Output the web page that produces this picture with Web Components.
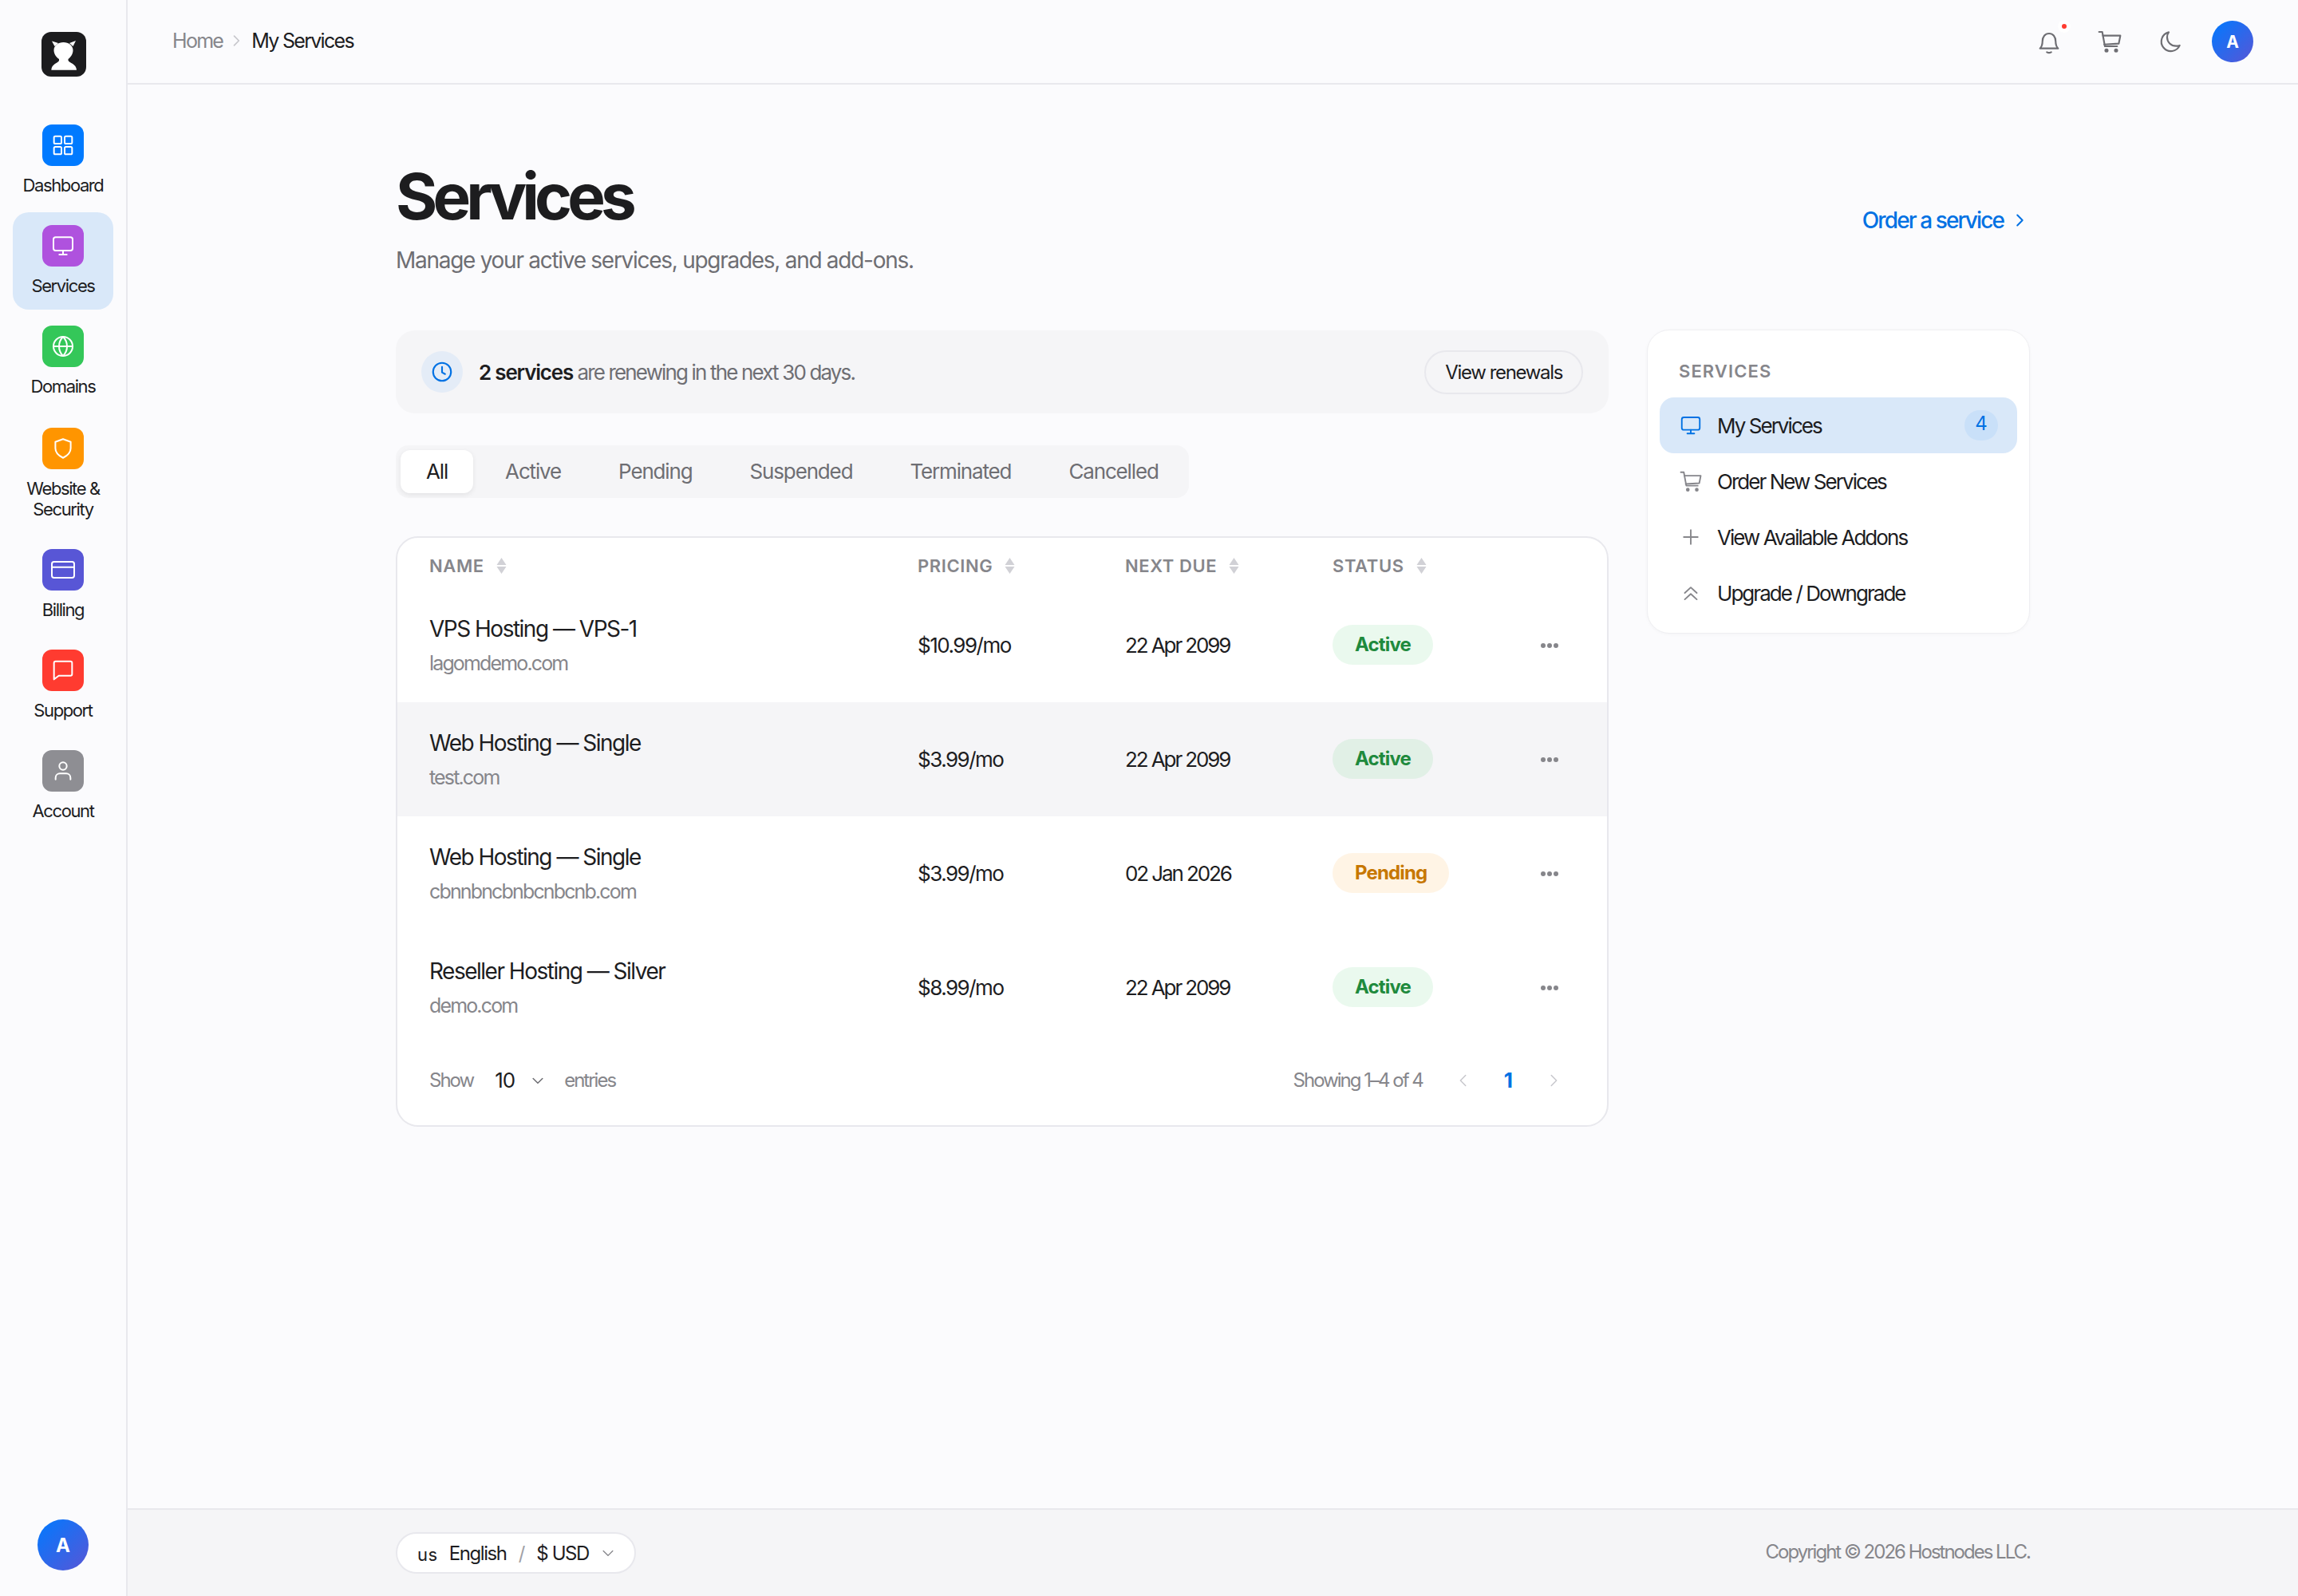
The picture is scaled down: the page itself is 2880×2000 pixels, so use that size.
<!doctype html>
<html>
<head>
<meta charset="utf-8">
<title>Services</title>
<style>
  html, body { margin: 0; height: 100%; }
  body { font-family: Inter, "Noto Sans", sans-serif; color: #1d1d1f; background: #fbfbfd; }
</style>
</head>
<body>
<app-shell>
  <side-nav slot="nav">
    <nav-item icon="grid" tint="#007aff">Dashboard</nav-item>
    <nav-item icon="monitor" tint="#af52de" active>Services</nav-item>
    <nav-item icon="globe" tint="#34c759">Domains</nav-item>
    <nav-item icon="shield" tint="#ff9500" style="margin-top:2px">Website &amp;<br>Security</nav-item>
    <nav-item icon="card" tint="#5856d6">Billing</nav-item>
    <nav-item icon="chat" tint="#ff3b30">Support</nav-item>
    <nav-item icon="user" tint="#8e8e93">Account</nav-item>
  </side-nav>
  <top-bar slot="top"></top-bar>

  <page-head></page-head>
  <div style="display:grid;grid-template-columns:1520px 480px;gap:48px;align-items:start">
    <div>
      <renew-banner></renew-banner>
      <filter-tabs></filter-tabs>
      <services-table>
        <service-row name="VPS Hosting — VPS-1" domain="lagomdemo.com" price="$10.99/mo" due="22 Apr 2099" status="Active"></service-row>
        <service-row name="Web Hosting — Single" domain="test.com" price="$3.99/mo" due="22 Apr 2099" status="Active" hover></service-row>
        <service-row name="Web Hosting — Single" domain="cbnnbncbnbcnbcnb.com" price="$3.99/mo" due="02 Jan 2026" status="Pending"></service-row>
        <service-row name="Reseller Hosting — Silver" domain="demo.com" price="$8.99/mo" due="22 Apr 2099" status="Active"></service-row>
      </services-table>
    </div>
    <side-menu>
      <side-link icon="monitor" count="4" active>My Services</side-link>
      <side-link icon="cart">Order New Services</side-link>
      <side-link icon="plus">View Available Addons</side-link>
      <side-link icon="upgrade">Upgrade / Downgrade</side-link>
    </side-menu>
  </div>

  <page-foot slot="foot"></page-foot>
</app-shell>

<script>
const icons = {
  grid: '<rect x="3.5" y="3.5" width="7" height="7" rx="1.2"/><rect x="13.5" y="3.5" width="7" height="7" rx="1.2"/><rect x="3.5" y="13.5" width="7" height="7" rx="1.2"/><rect x="13.5" y="13.5" width="7" height="7" rx="1.2"/>',
  monitor: '<rect x="3" y="4" width="18" height="12.5" rx="2"/><path d="M12 16.5v3.5M8.5 20.2h7"/>',
  globe: '<circle cx="12" cy="12" r="9"/><path d="M3 12h18M12 3c-5 5-5 13 0 18M12 3c5 5 5 13 0 18"/>',
  shield: '<path d="M12 3.2l7.2 2.6v6c0 4-3 6.9-7.2 9-4.2-2.1-7.2-5-7.2-9v-6z"/>',
  card: '<rect x="1.5" y="4.5" width="21" height="15" rx="2"/><path d="M1.5 9.5h21"/>',
  chat: '<path d="M5 3.5h14a1.5 1.5 0 0 1 1.5 1.5v10.5a1.5 1.5 0 0 1-1.5 1.5H8l-4.5 3.5V5A1.5 1.5 0 0 1 5 3.5z"/>',
  user: '<circle cx="12" cy="7.5" r="3.5"/><path d="M5 20v-1.5c0-2.500 2-4 4-4h6c2 0 4 1.500 4 4V20"/>',
  cart: '<path d="M2 3h3l2.5 13.5h11.5"/><path d="M5.7 6.5H22l-1.5 7.5-13.6.8"/><circle cx="9" cy="20.5" r="1.1" fill="currentColor"/><circle cx="18" cy="20.5" r="1.1" fill="currentColor"/>',
  plus: '<path d="M12 5v14M5 12h14"/>',
  upgrade: '<path d="M6 12l6-5.5 6 5.500M6 18.500l6-5.500 6 5.500"/>',
  bell: '<path d="M3.5 18.5c1.5-1.500 2.300-3 2.300-6.500 0-4.500 2.500-7.500 6.200-7.500s6.200 3 6.200 7.500c0 3.500.8 5 2.300 6.500z"/><path d="M10 22c1.200.7 2.800.7 4 0"/>',
  moon: '<path d="M10.5 3.3a9 9 0 1 0 10.300 12.400 8.500 8.500 0 0 1-3.300.5C12.500 16.200 9 12.500 9 8c0-1.800.5-3.400 1.500-4.700z"/>',
  clock: '<circle cx="12" cy="12" r="9"/><path d="M12 7v5.5l3 1.7"/>',
  right: '<path d="M9 5l7 7-7 7"/>',
  left: '<path d="M15 5l-7 7 7 7"/>',
  down: '<path d="M5 9l7 7 7-7"/>'
};

function svg(name, size, stroke) {
  return `<svg width="${size}" height="${size}" viewBox="0 0 24 24" fill="none" stroke="currentColor" stroke-width="${stroke}" stroke-linecap="round" stroke-linejoin="round">${icons[name]}</svg>`;
}

// shorthand: class with a shadow root filled from a render function
function define(tag, css, render) {
  customElements.define(tag, class extends HTMLElement {
    connectedCallback() {
      if (this.shadowRoot) return;
      this.attachShadow({ mode: 'open' }).innerHTML = `<style>${css}</style>${render(this)}`;
    }
  });
}

define('app-shell', `
  :host { display: grid; grid-template-columns: 160px 1fr; height: 2000px; }
  .nav { border-right: 2px solid #e8e8ed; display: flex; flex-direction: column; min-height: 0; }
  .col { display: flex; flex-direction: column; min-width: 0; }
  .main { flex: 1; padding: 94px 336px 0; }
`, () => `
  <div class="nav"><slot name="nav"></slot></div>
  <div class="col">
    <slot name="top"></slot>
    <div class="main"><slot></slot></div>
    <slot name="foot"></slot>
  </div>
`);

define('side-nav', `
  :host { display: flex; flex-direction: column; flex: 1; padding: 40px 16px 32px; }
  .logo { width: 56px; height: 56px; margin: 0 0 44px 36px; }
  .list { display: flex; flex-direction: column; gap: 4px; flex: 1; }
  .avatar { width: 64px; height: 64px; border-radius: 50%; margin-left: 31px; display: flex; align-items: center; justify-content: center;
    background: linear-gradient(135deg, #007aff, #5856d6); color: #fff; font-weight: 700; font-size: 24px; }
`, () => `
  <svg class="logo" viewBox="0 0 56 56">
    <rect width="56" height="56" rx="12" fill="#1c1c1e"/>
    <path fill="#fff" d="M13 11.5L21 14L16.5 18ZM43 11L35 14L39.5 18Z"/>
    <path fill="#fff" d="M27.5 13C34 13 39.5 17 39.5 23C39.5 28 36 32 33.5 34L33.5 37L22 37L22 34C19 32 15.5 28 15.5 23C15.5 17 21 13 27.5 13Z"/>
    <path fill="#fff" d="M22 36C21 39 12.5 40 12.3 47.8L44 47.8C43.7 40 35 39 33.5 36Z"/>
  </svg>
  <div class="list"><slot></slot></div>
  <div class="avatar">A</div>
`);

define('nav-item', `
  :host { display: flex; flex-direction: column; align-items: center; gap: 11px; padding: 16px 0 17px; border-radius: 20px; }
  :host([active]) { background: #d9e8f9; }
  .tile { width: 52px; height: 52px; border-radius: 12px; color: #fff; display: flex; align-items: center; justify-content: center; }
  .label { font-size: 22px; line-height: 26px; text-align: center; color: #1d1d1f; letter-spacing: -1.4px; white-space: nowrap; }
`, (el) => `
  <div class="tile" style="background:${el.getAttribute('tint')}">${svg(el.getAttribute('icon'), 32, 1.5)}</div>
  <div class="label"><slot></slot></div>
`);

define('top-bar', `
  :host { display: flex; align-items: center; justify-content: space-between; height: 104px; border-bottom: 2px solid #e8e8ed; padding: 0 56px; }
  .crumbs { display: flex; align-items: center; font-size: 25px; letter-spacing: -1.7px; margin-bottom: 2px; }
  .crumbs span:first-child { color: #86868b; }
  .crumbs svg { color: #c7c7cc; margin: 0 9px 0 7px; }
  .tools { display: flex; align-items: center; color: #6e6e73; }
  .tool { position: relative; display: flex; width: 32px; height: 32px; margin-right: 44px; }
  .dot { position: absolute; top: -11px; right: -11px; width: 6px; height: 6px; border-radius: 50%; background: #ff3b30; border: 5px solid #fff; }
  .avatar { width: 52px; height: 52px; border-radius: 50%; background: linear-gradient(135deg, #007aff, #5856d6); color: #fff; display: flex; align-items: center; justify-content: center; font-weight: 700; font-size: 21px; margin-left: 4px; }
`, () => `
  <div class="crumbs"><span>Home</span>${svg('right', 20, 2)}<span>My Services</span></div>
  <div class="tools">
    <div class="tool">${svg('bell', 32, 1.6)}<i class="dot"></i></div>
    <div class="tool">${svg('cart', 32, 1.6)}</div>
    <div class="tool" style="margin-right:32px">${svg('moon', 32, 1.6)}</div>
    <div class="avatar">A</div>
  </div>
`);

define('page-head', `
  :host { display: flex; justify-content: space-between; align-items: flex-start; margin-bottom: 68px; }
  h1 { margin: 0; font-size: 80px; line-height: 92px; font-weight: 700; letter-spacing: -5.9px; color: #1d1d1f; }
  p { margin: 14px 0 0; font-size: 28px; line-height: 40px; color: #6e6e73; letter-spacing: -1.28px; }
  a { display: flex; align-items: center; gap: 9px; margin: 59px 2px 0 0; color: #0071e3; font-size: 28px; font-weight: 500; letter-spacing: -1.9px; }
`, () => `
  <div><h1>Services</h1><p>Manage your active services, upgrades, and add-ons.</p></div>
  <a>Order a service ${svg('right', 22, 2.2)}</a>
`);

define('renew-banner', `
  :host { display: flex; align-items: center; height: 104px; box-sizing: border-box; padding: 0 32px; background: #f5f5f7; border-radius: 24px; }
  .clock { width: 52px; height: 52px; border-radius: 50%; background: #e4ecf7; color: #0071e3; display: flex; align-items: center; justify-content: center; margin-right: 20px; }
  .text { flex: 1; font-size: 26px; color: #6e6e73; letter-spacing: -1.85px; }
  b { color: #1d1d1f; font-weight: 600; letter-spacing: -1.2px; }
  .btn { height: 51px; padding: 0 24px; display: flex; align-items: center; border: 2px solid #e8e8ed; border-radius: 28px; color: #1d1d1f; font-size: 24px; letter-spacing: -1.35px; }
`, () => `
  <div class="clock">${svg('clock', 30, 1.7)}</div>
  <div class="text"><b>2 services</b> are renewing in the next 30 days.</div>
  <div class="btn">View renewals</div>
`);

define('filter-tabs', `
  :host { display: inline-flex; gap: 8px; padding: 6px; margin: 40px 0 48px; background: #f5f5f7; border-radius: 16px; vertical-align: top; }
  div { height: 54px; line-height: 54px; padding: 0 32px; font-size: 26px; letter-spacing: -1.15px; color: #6e6e73; border-radius: 12px; }
  .on { background: #fff; color: #1d1d1f; box-shadow: 0 2px 6px rgba(0,0,0,.08); }
`, () => ['All', 'Active', 'Pending', 'Suspended', 'Terminated', 'Cancelled']
  .map((t, i) => `<div class="${i ? '' : 'on'}">${t}</div>`).join(''));

const columns = 'grid-template-columns: 652px 260px 260px 261px 1fr;';

define('services-table', `
  :host { display: block; height: 740px; box-sizing: border-box; background: #fff; border: 2px solid #e8e8ed; border-radius: 28px; overflow: hidden; }
  .head { display: grid; ${columns} height: 63px; box-sizing: border-box; padding-top: 6px; align-items: center; font-size: 22px; font-weight: 600; letter-spacing: .6px; color: #86868b; }
  .head div { display: flex; align-items: center; gap: 15px; }
  .head div:first-child { padding-left: 40px; }
  .foot { display: flex; align-items: center; height: 100px; box-sizing: border-box; padding: 0 56px 11px 40px; color: #86868b; font-size: 24px; letter-spacing: -2px; }
  .num { color: #1d1d1f; font-size: 26px; margin-left: 27px; letter-spacing: -1px; }
  .chev { margin: 0 23px 0 19px; display: flex; color: #6e6e73; }
  .gap { flex: 1; }
  .pager { display: flex; align-items: center; color: #c7c7cc; margin-left: 40px; }
  .one { color: #0071e3; font-weight: 700; font-size: 26px; margin: 0 40px; letter-spacing: 0; }
`, () => {
  const sort = `<svg width="13" height="20" viewBox="0 0 13 20"><path fill="#d1d1d6" d="M6.5 0l6 9H.5zM6.5 20l-6-9h12z"/></svg>`;
  return `
    <div class="head">
      <div>NAME ${sort}</div><div>PRICING ${sort}</div><div>NEXT DUE ${sort}</div><div>STATUS ${sort}</div><div></div>
    </div>
    <slot></slot>
    <div class="foot">
      <span>Show</span><span class="num">10</span><span class="chev">${svg('down', 20, 1.8)}</span><span>entries</span>
      <span class="gap"></span>
      <span>Showing 1–4 of 4</span>
      <span class="pager">${svg('left', 22, 1.6)}<span class="one">1</span>${svg('right', 22, 1.6)}</span>
    </div>
  `;
});

define('service-row', `
  :host { display: grid; ${columns} height: 143px; align-items: center; }
  :host([hover]) { background: #f5f5f7; }
  .name { padding-left: 40px; }
  .title { font-size: 28px; line-height: 36px; font-weight: 400; letter-spacing: -1.5px; color: #1d1d1f; }
  .sub { font-size: 25px; line-height: 34px; margin-top: 8px; color: #86868b; letter-spacing: -1.85px; }
  .price { font-size: 26px; letter-spacing: -1.5px; color: #1d1d1f; }
  .due { font-size: 26px; letter-spacing: -2.1px; color: #1d1d1f; }
  .dots { display: flex; gap: 2px; }
  .dots i { width: 6px; height: 6px; border-radius: 50%; background: #86868b; }
`, (el) => {
  const a = (k) => el.getAttribute(k);
  return `
    <div class="name"><div class="title">${a('name')}</div><div class="sub">${a('domain')}</div></div>
    <div class="price">${a('price')}</div>
    <div class="due">${a('due')}</div>
    <div><status-pill kind="${a('status')}">${a('status')}</status-pill></div>
    <div class="dots"><i></i><i></i><i></i></div>
  `;
});

define('status-pill', `
  :host { display: inline-flex; align-items: center; height: 50px; padding: 0 28px; border-radius: 25px; font-size: 24px; font-weight: 700; letter-spacing: -.85px; margin-bottom: 2px; }
  :host([kind="Active"]) { background: rgba(52,199,89,.1); color: #1f8a3d; }
  :host([kind="Pending"]) { background: rgba(255,149,0,.1); color: #c77700; }
`, () => `<slot></slot>`);

define('side-menu', `
  :host { display: flex; flex-direction: column; box-sizing: border-box; height: 381px; padding: 0 15px; margin-top: -1px; background: #fff; border: 1px solid #efeff2; border-radius: 28px; box-shadow: 0 1px 4px rgba(0,0,0,.03); }
  .label { height: 84px; box-sizing: border-box; padding: 38px 0 0 24px; line-height: 26px; font-size: 22px; font-weight: 600; letter-spacing: .05em; color: #86868b; }
`, () => `<div class="label">SERVICES</div><slot></slot>`);

define('side-link', `
  :host { display: flex; align-items: center; height: 70px; padding: 0 24px; border-radius: 18px; gap: 18px; font-size: 26px; letter-spacing: -1.95px; color: #1d1d1f; flex: none; }
  :host([active]) { background: #d9e8f9; }
  .ic { display: flex; color: #86868b; }
  :host([active]) .ic { color: #0071e3; }
  .txt { flex: 1; }
  .badge { width: 42px; height: 38px; box-sizing: border-box; padding-bottom: 5px; border-radius: 19px; background: #c9e0f9; color: #0071e3; font-size: 24px; letter-spacing: 0; display: flex; align-items: center; justify-content: center; }
`, (el) => `
  <span class="ic">${svg(el.getAttribute('icon'), 30, 1.5)}</span>
  <span class="txt"><slot></slot></span>
  ${el.hasAttribute('count') ? `<span class="badge">${el.getAttribute('count')}</span>` : ''}
`);

define('page-foot', `
  :host { display: flex; align-items: center; justify-content: space-between; height: 108px; padding: 0 336px; background: #f5f5f7; border-top: 2px solid #e8e8ed; font-size: 24px; letter-spacing: -2px; }
  .pill { display: flex; align-items: center; height: 48px; padding: 0 23px 0 25px; background: #fff; border: 2px solid #e8e8ed; border-radius: 28px; color: #1d1d1f; letter-spacing: -1.4px; }
  .flag { font-size: 22px; margin: 4px 14px 0 0; letter-spacing: .5px; }
  .sl { color: #a1a1a6; margin: 0 14px 0 15px; letter-spacing: 0; }
  .ch { display: flex; color: #86868b; margin-left: 14px; }
  .copy { color: #86868b; margin-bottom: 4px; }
`, () => `
  <div class="pill"><span class="flag">us</span><span>English</span><span class="sl">/</span><span>$ USD</span><span class="ch">${svg('down', 20, 1.6)}</span></div>
  <div class="copy">Copyright © 2026 Hostnodes LLC.</div>
`);
</script>
</body>
</html>
